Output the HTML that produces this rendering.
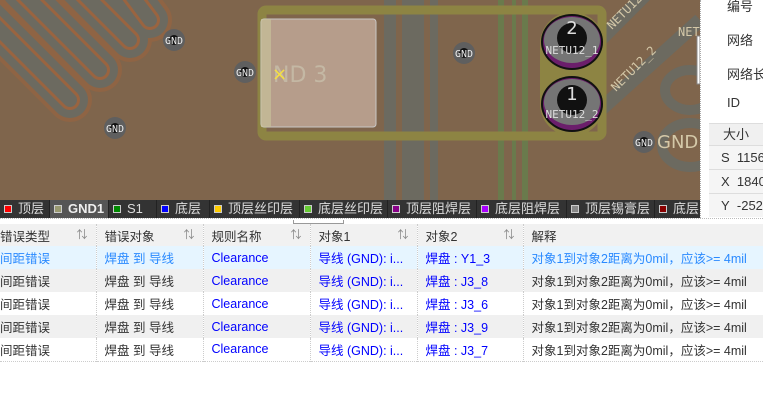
<!DOCTYPE html>
<html><head><meta charset="utf-8"><style>
*{margin:0;padding:0;box-sizing:border-box}
body{width:763px;height:419px;overflow:hidden;background:#fff;font-family:"Liberation Sans","Noto Sans CJK SC",sans-serif;position:relative}
.lb{position:absolute;left:0;top:200px;width:700px;height:18px;background:#333;color:#ddd;font-size:13px;white-space:nowrap;overflow:hidden}
.lb span{position:absolute;top:0;height:18px;line-height:18px;padding-left:4px;border-right:1px solid #222}
.lb i{display:inline-block;width:8px;height:8px;border:1px solid #ccc;margin-right:6px;vertical-align:0px}
.rp{position:absolute;left:700px;top:0;width:63px;height:218px;background:#fff;border-left:1px dotted #aaa;font-size:13px;color:#333;overflow:hidden;white-space:nowrap}
.sep{position:absolute;left:0;top:218px;width:763px;height:6px;background:#fff;border-top:1px dotted #bbb}
table{position:absolute;left:0;top:224px;border-collapse:collapse;font-size:12.5px;table-layout:fixed;width:763px}
td{height:23px;padding:0 8px;border-right:1px dotted #ccc;white-space:nowrap;overflow:hidden}
tr.h td{background:#f1f1f1;color:#333;height:22px;position:relative}
.s{float:right;color:#888;font-size:11px}
.b{color:#00f}.lb2{color:#2a8aff}
</style></head><body>
<svg width="700" height="200" style="position:absolute;left:0;top:0" xmlns="http://www.w3.org/2000/svg">
<rect width="700" height="200" fill="#7f654c"/>
<g fill="none" stroke-linecap="round">
<path d="M-20 10 L70 100 M20 -10 L100 70 M70 -20 L130 40 M120 -20 L150 20" stroke="#9a6440" stroke-width="44" opacity=".6"/>
<path d="M-20 10 L70 100 M20 -10 L100 70 M70 -20 L130 40 M120 -20 L150 20" stroke="#6c6a60" stroke-width="36"/>
<path d="M-20 10 L70 100 M20 -10 L100 70 M70 -20 L130 40 M120 -20 L150 20" stroke="#9a6440" stroke-width="20"/>
<path d="M-20 10 L70 100 M20 -10 L100 70 M70 -20 L130 40 M120 -20 L150 20" stroke="#6c6a60" stroke-width="14"/>
</g>
<rect x="384" y="0" width="12" height="200" fill="#6c6a60"/>
<rect x="402" y="0" width="22" height="200" fill="#6c6a60"/>
<rect x="430" y="0" width="8" height="200" fill="#6c6a60"/>
<rect x="498" y="0" width="6" height="200" fill="#6a7a4c"/>
<rect x="512" y="0" width="4" height="200" fill="#6a7a4c"/>
<rect x="522" y="0" width="6" height="200" fill="#6a7a4c"/>
<g stroke="#6c6a60" stroke-width="14" fill="none"><path d="M600 40 L660 -20"/><path d="M600 110 L700 20"/></g>
<g stroke="#6c6a60" stroke-width="10" fill="none"><ellipse cx="690" cy="90" rx="25" ry="20"/><ellipse cx="690" cy="145" rx="28" ry="22"/></g>
<rect x="262" y="10" width="340" height="126" rx="4" fill="none" stroke="#8d8443" stroke-width="9"/>
<rect x="261" y="19" width="115" height="108" rx="3" fill="#b9a08f" stroke="#ccc" stroke-width="1" opacity=".95"/>
<rect x="261" y="19" width="10" height="108" fill="#c8c09a" opacity=".7"/>
<text x="273" y="82" fill="#c4b8a4" font-size="22" font-family="DejaVu Sans">ND 3</text>
<text x="272" y="80" fill="#f5e040" font-size="18" font-family="DejaVu Sans">×</text>
<g>
<rect x="540" y="12" width="64" height="124" rx="32" fill="#8d8443"/>
<ellipse cx="572" cy="42" rx="31" ry="28" fill="#111"/><ellipse cx="572" cy="42" rx="29" ry="26" fill="#6b1e6b"/><ellipse cx="572" cy="40" rx="28" ry="23" fill="#757575"/><circle cx="572" cy="38" r="15" fill="#111"/>
<ellipse cx="572" cy="104" rx="31" ry="28" fill="#111"/><ellipse cx="572" cy="104" rx="29" ry="26" fill="#6b1e6b"/><ellipse cx="572" cy="102" rx="28" ry="23" fill="#757575"/><circle cx="572" cy="100" r="15" fill="#111"/>
<text x="572" y="34" fill="#ddd" font-size="18" text-anchor="middle" font-family="DejaVu Sans">2</text>
<text x="572" y="100" fill="#ddd" font-size="18" text-anchor="middle" font-family="DejaVu Sans">1</text>
<text x="572" y="54" fill="#ddd" font-size="11" text-anchor="middle" font-family="DejaVu Sans Mono">NETU12_1</text>
<text x="572" y="118" fill="#ddd" font-size="11" text-anchor="middle" font-family="DejaVu Sans Mono">NETU12_2</text>
</g>
<g fill="#d4c8a8" font-family="DejaVu Sans Mono" font-size="12">
<text transform="translate(612 30) rotate(-45)">NETU12</text>
<text transform="translate(616 92) rotate(-45)">NETU12_2</text>
<text x="678" y="36">NET</text>
<text x="657" y="148" font-size="18" font-family="DejaVu Sans">GND</text>
</g>
<g font-family="DejaVu Sans Mono" font-size="10" fill="#eee" text-anchor="middle">
<circle cx="174" cy="40" r="11" fill="#5f5f5f"/><circle cx="174" cy="40" r="5" fill="#111"/><text x="174" y="44">GND</text>
<circle cx="245" cy="72" r="11" fill="#5f5f5f"/><circle cx="245" cy="72" r="5" fill="#111"/><text x="245" y="76">GND</text>
<circle cx="115" cy="128" r="11" fill="#5f5f5f"/><circle cx="115" cy="128" r="5" fill="#111"/><text x="115" y="132">GND</text>
<circle cx="464" cy="53" r="11" fill="#5f5f5f"/><circle cx="464" cy="53" r="5" fill="#111"/><text x="464" y="57">GND</text>
<circle cx="644" cy="142" r="11" fill="#5f5f5f"/><circle cx="644" cy="142" r="5" fill="#111"/><text x="644" y="146">GND</text>
</g>
<rect x="697" y="36" width="3" height="48" fill="#fff" stroke="#888"/>
</svg>
<div class="lb"><span style="left:0;width:50px"><i style="background:#f00"></i>顶层</span><span style="left:50px;width:59px;background:#555;font-weight:bold;color:#eee"><i style="background:#999970"></i>GND1</span><span style="left:109px;width:48px"><i style="background:#080"></i>S1</span><span style="left:157px;width:53px"><i style="background:#00f"></i>底层</span><span style="left:210px;width:90px"><i style="background:#fc0"></i>顶层丝印层</span><span style="left:300px;width:88px"><i style="background:#6c3"></i>底层丝印层</span><span style="left:388px;width:89px"><i style="background:#808"></i>顶层阻焊层</span><span style="left:477px;width:90px"><i style="background:#a0f"></i>底层阻焊层</span><span style="left:567px;width:88px"><i style="background:#888"></i>顶层锡膏层</span><span style="left:655px;width:60px"><i style="background:#800"></i>底层</span></div>
<div class="rp">
<div style="position:absolute;left:26px;top:-4px;color:#333">编号</div>
<div style="position:absolute;left:26px;top:30px">网络</div>
<div style="position:absolute;left:26px;top:64px">网络长</div>
<div style="position:absolute;left:26px;top:95px">ID</div>
<div style="position:absolute;left:8px;top:123px;width:60px;height:22px;background:#f0f0f0;line-height:22px;padding-left:14px;border-top:1px solid #ddd">大小</div>
<div style="position:absolute;left:8px;top:145px;width:60px;height:24px;background:#f5f5f5;line-height:24px;padding-left:12px;border-top:1px solid #ddd">S&nbsp;&nbsp;1156</div>
<div style="position:absolute;left:8px;top:169px;width:60px;height:24px;background:#f5f5f5;line-height:24px;padding-left:12px;border-top:1px solid #ddd">X&nbsp;&nbsp;1840</div>
<div style="position:absolute;left:8px;top:193px;width:60px;height:24px;background:#f5f5f5;line-height:24px;padding-left:12px;border-top:1px solid #ddd">Y&nbsp;&nbsp;-252</div>
</div>
<div class="sep"><div style="position:absolute;left:293px;top:1px;width:51px;height:4px;border:1px solid #999;border-top:none"></div></div>
<table>
<colgroup><col style="width:96px"><col style="width:107px"><col style="width:107px"><col style="width:107px"><col style="width:106px"><col style="width:240px"></colgroup>
<tr class="h"><td style="padding-left:0">错误类型<span class="s">⇅</span></td><td>错误对象<span class="s">⇅</span></td><td>规则名称<span class="s">⇅</span></td><td>对象1<span class="s">⇅</span></td><td>对象2<span class="s">⇅</span></td><td>解释</td></tr>
<tr style="background:#e6f5ff"><td class="lb2" style="padding-left:0">间距错误</td><td class="lb2">焊盘 到 导线</td><td class="b">Clearance</td><td class="b">导线 (GND): i...</td><td class="b">焊盘 : Y1_3</td><td class="lb2">对象1到对象2距离为0mil，应该&gt;= 4mil</td></tr>
<tr style="background:#f0f0f0;color:#333"><td style="padding-left:0">间距错误</td><td>焊盘 到 导线</td><td class="b">Clearance</td><td class="b">导线 (GND): i...</td><td class="b">焊盘 : J3_8</td><td>对象1到对象2距离为0mil，应该&gt;= 4mil</td></tr>
<tr style="background:#fff;color:#333"><td style="padding-left:0">间距错误</td><td>焊盘 到 导线</td><td class="b">Clearance</td><td class="b">导线 (GND): i...</td><td class="b">焊盘 : J3_6</td><td>对象1到对象2距离为0mil，应该&gt;= 4mil</td></tr>
<tr style="background:#f0f0f0;color:#333"><td style="padding-left:0">间距错误</td><td>焊盘 到 导线</td><td class="b">Clearance</td><td class="b">导线 (GND): i...</td><td class="b">焊盘 : J3_9</td><td>对象1到对象2距离为0mil，应该&gt;= 4mil</td></tr>
<tr style="background:#fff;color:#333;border-bottom:1px dotted #ccc"><td style="padding-left:0">间距错误</td><td>焊盘 到 导线</td><td class="b">Clearance</td><td class="b">导线 (GND): i...</td><td class="b">焊盘 : J3_7</td><td>对象1到对象2距离为0mil，应该&gt;= 4mil</td></tr>
</table>
</body></html>
